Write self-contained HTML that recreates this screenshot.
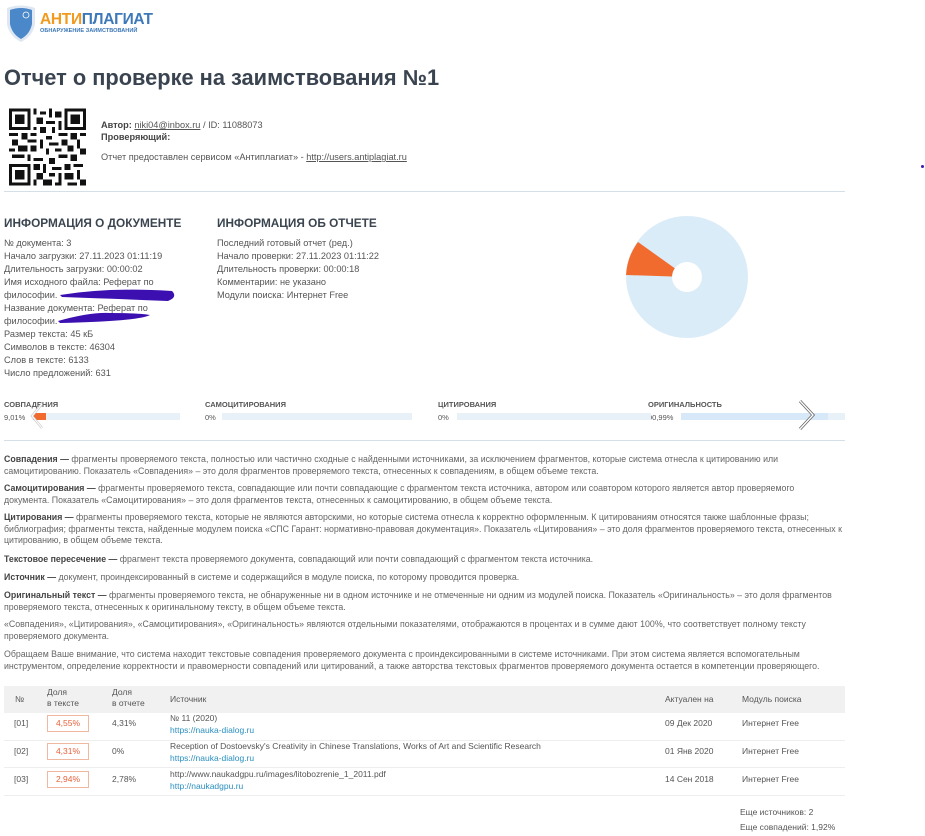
<!DOCTYPE html>
<html><head><meta charset="utf-8"><style>
*{margin:0;padding:0;box-sizing:border-box}
body{width:925px;height:836px;background:#fff;position:relative;overflow:hidden;font-family:"Liberation Sans","DejaVu Sans",sans-serif;color:#555}
.a{position:absolute;white-space:nowrap}
.s{font-size:9.2px;color:#555}
.p{font-size:8.8px;color:#666}
.p b{color:#444}
.h{font-size:11.8px;font-weight:bold;color:#3b4550}
.lbl{font-size:7.5px;font-weight:bold;color:#555}
.bar{position:absolute;height:7px;background:#e9f1f8}
.t{font-size:8.5px;color:#555}
.lnk{color:#2a8fc0}
.box{position:absolute;width:42px;height:17px;border:1px solid #f0b8a0;color:#e8603a;font-size:8.5px;text-align:center;line-height:15px}
</style></head><body>
<svg class="a" style="left:5px;top:4px" width="32" height="40" viewBox="0 0 32 40"><path d="M2 4 Q16 -1 30 4 L30 20 Q28 32 16 38 Q4 32 2 20 Z" fill="#dfe8f2"/><path d="M5 6 Q16 2 27 6 L27 20 Q25 30 16 35 Q7 30 5 20 Z" fill="#4a88c9"/><circle cx="21" cy="11" r="3" fill="none" stroke="#fff" stroke-width="0.8"/></svg>
<div class="a" style="left:40px;top:11px;font-size:15.5px;font-weight:bold;letter-spacing:-0.3px"><span style="color:#f29a1e">АНТИ</span><span style="color:#3d78b8">ПЛАГИАТ</span></div>
<div class="a" style="left:40px;top:28px;font-size:5.6px;font-weight:bold;color:#3d78b8">ОБНАРУЖЕНИЕ ЗАИМСТВОВАНИЙ</div>
<div class="a" style="left:4px;top:65px;font-size:21.8px;font-weight:bold;color:#3a4450">Отчет о проверке на заимствования №1</div>
<svg class="a" style="left:9px;top:108px" width="77" height="78" viewBox="0 0 25 25" shape-rendering="crispEdges">
<rect width="25" height="25" fill="#fff"/>
<g fill="#111"><path d="M0 0h7v7H0zM18 0h7v7h-7zM0 18h7v7H0z"/></g>
<g fill="#fff"><path d="M1 1h5v5H1zM19 1h5v5h-5zM1 19h5v5H1z"/></g>
<g fill="#111"><path d="M2 2h3v3H2zM20 2h3v3h-3zM2 20h3v3H2z"/>
<path d="M8 0h1v2H8zM10 1h2v1h-2zM13 0h1v3h-1zM15 1h2v2h-2zM9 3h2v2H9zM12 4h3v1h-3zM16 4h1v3h-1zM8 6h1v1H8zM10 6h2v2h-2zM14 6h1v2h-1zM0 8h3v1H0zM4 8h2v2H4zM7 8h2v1H7zM12 9h2v1h-2zM16 8h3v1h-3zM20 8h2v2h-2zM23 8h2v1h-2zM1 10h2v2H1zM6 10h3v1H6zM10 10h1v3h-1zM13 11h3v1h-3zM17 10h2v2h-2zM22 10h1v3h-1zM0 13h2v1H0zM3 12h3v2H3zM7 12h2v2H7zM12 13h1v2h-1zM15 13h2v1h-2zM19 12h2v2h-2zM23 13h2v2h-2zM1 15h4v1H1zM6 15h1v2H6zM8 16h3v1H8zM13 16h2v2h-2zM16 15h3v1h-3zM20 15h2v2h-2zM8 18h2v2H8zM11 18h1v3h-1zM14 19h3v1h-3zM18 18h2v2h-2zM21 18h3v1h-3zM9 21h2v2H9zM13 21h2v1h-2zM16 21h1v3h-1zM18 21h3v2h-3zM22 20h1v3h-1zM8 23h1v2H8zM11 23h3v2h-3zM15 24h2v1h-2zM19 24h3v1h-3zM23 23h2v2h-2z"/></g></svg>
<div class="a s" style="left:101px;top:120px"><b style="color:#444">Автор:</b> <u>niki04@inbox.ru</u> / ID: 11088073</div>
<div class="a s" style="left:101px;top:132px;font-weight:bold;color:#444">Проверяющий:</div>
<div class="a s" style="left:101px;top:152px">Отчет предоставлен сервисом «Антиплагиат» - <u>http://users.antiplagiat.ru</u></div>
<div class="a" style="left:4px;top:191px;width:841px;height:1px;background:#d5dfe8"></div>
<div class="a" style="left:921px;top:165px;width:3px;height:3px;border-radius:50%;background:#3a1bb0"></div>
<div class="a h" style="left:4px;top:216px">ИНФОРМАЦИЯ О ДОКУМЕНТЕ</div>
<div class="a h" style="left:217px;top:216px">ИНФОРМАЦИЯ ОБ ОТЧЕТЕ</div>
<div class="a s" style="left:4px;top:237px;line-height:13px">№ документа: 3<br>Начало загрузки: 27.11.2023 01:11:19<br>Длительность загрузки: 00:00:02<br>Имя исходного файла: Реферат по<br>философии.<br>Название документа: Реферат по<br>философии.<br>Размер текста: 45 кБ<br>Символов в тексте: 46304<br>Слов в тексте: 6133<br>Число предложений: 631</div>
<svg class="a" style="left:50px;top:285px" width="130" height="40"><path d="M10 10 Q60 2 122 6 Q128 12 118 16 Q70 14 12 12Z" fill="#3b0fb0"/><path d="M8 36 Q40 27 60 28 Q90 28 100 30 Q90 36 10 38Z" fill="#3b0fb0"/></svg>
<div class="a s" style="left:217px;top:237px;line-height:13px">Последний готовый отчет (ред.)<br>Начало проверки: 27.11.2023 01:11:22<br>Длительность проверки: 00:00:18<br>Комментарии: не указано<br>Модули поиска: Интернет Free</div>
<svg class="a" style="left:620px;top:210px" width="135" height="135" viewBox="-67 -67 135 135">
<circle r="61" fill="#dbecf9"/>
<path d="M0 0 L-61 -2 A61 61 0 0 1 -49 -35 Z" fill="#f26b2e"/>
<circle r="15" fill="#fff"/></svg>
<div class="a lbl" style="left:4px;top:400px">СОВПАДЕНИЯ</div>
<div class="a lbl" style="left:205px;top:400px">САМОЦИТИРОВАНИЯ</div>
<div class="a lbl" style="left:438px;top:400px">ЦИТИРОВАНИЯ</div>
<div class="a lbl" style="left:648px;top:400px">ОРИГИНАЛЬНОСТЬ</div>
<div class="a lbl" style="left:4px;top:413px;font-weight:normal">9,01%</div>
<div class="a lbl" style="left:205px;top:413px;font-weight:normal">0%</div>
<div class="a lbl" style="left:438px;top:413px;font-weight:normal">0%</div>
<div class="a lbl" style="left:648px;top:413px;font-weight:normal">90,99%</div>
<div class="bar" style="left:33px;top:413px;width:147px"></div>
<div class="bar" style="left:33px;top:413px;width:13px;background:#f26b2e"></div>
<div class="bar" style="left:222px;top:413px;width:190px"></div>
<div class="bar" style="left:457px;top:413px;width:194px"></div>
<div class="bar" style="left:681px;top:413px;width:164px"></div>
<div class="bar" style="left:681px;top:413px;width:147px;background:#d7e9f8"></div>
<svg class="a" style="left:28px;top:400px" width="20" height="32"><path d="M14 4 L4 16 L14 28" fill="none" stroke="#ccc" stroke-width="2.5"/><path d="M14 4 L4 16 L14 28" fill="none" stroke="#fff" stroke-width="1"/></svg>
<svg class="a" style="left:795px;top:398px" width="24" height="34"><path d="M5 3 L18 17 L5 31" fill="none" stroke="#666" stroke-width="3"/><path d="M5 3 L18 17 L5 31" fill="none" stroke="#fff" stroke-width="1.4"/></svg>
<div class="a" style="left:4px;top:440px;width:841px;height:1px;background:#d5dfe8"></div>
<div class="a p" style="left:4px;top:454px;line-height:11.5px"><b>Совпадения —</b> фрагменты проверяемого текста, полностью или частично сходные с найденными источниками, за исключением фрагментов, которые система отнесла к цитированию или<br>самоцитированию. Показатель «Совпадения» – это доля фрагментов проверяемого текста, отнесенных к совпадениям, в общем объеме текста.</div>
<div class="a p" style="left:4px;top:483px;line-height:11.5px"><b>Самоцитирования —</b> фрагменты проверяемого текста, совпадающие или почти совпадающие с фрагментом текста источника, автором или соавтором которого является автор проверяемого<br>документа. Показатель «Самоцитирования» – это доля фрагментов текста, отнесенных к самоцитированию, в общем объеме текста.</div>
<div class="a p" style="left:4px;top:512px;line-height:11.5px"><b>Цитирования —</b> фрагменты проверяемого текста, которые не являются авторскими, но которые система отнесла к корректно оформленным. К цитированиям относятся также шаблонные фразы;<br>библиография; фрагменты текста, найденные модулем поиска «СПС Гарант: нормативно-правовая документация». Показатель «Цитирования» – это доля фрагментов проверяемого текста, отнесенных к<br>цитированию, в общем объеме текста.</div>
<div class="a p" style="left:4px;top:554px"><b>Текстовое пересечение —</b> фрагмент текста проверяемого документа, совпадающий или почти совпадающий с фрагментом текста источника.</div>
<div class="a p" style="left:4px;top:572px"><b>Источник —</b> документ, проиндексированный в системе и содержащийся в модуле поиска, по которому проводится проверка.</div>
<div class="a p" style="left:4px;top:590px;line-height:11.5px"><b>Оригинальный текст —</b> фрагменты проверяемого текста, не обнаруженные ни в одном источнике и не отмеченные ни одним из модулей поиска. Показатель «Оригинальность» – это доля фрагментов<br>проверяемого текста, отнесенных к оригинальному тексту, в общем объеме текста.</div>
<div class="a p" style="left:4px;top:619px;line-height:11.5px">«Совпадения», «Цитирования», «Самоцитирования», «Оригинальность» являются отдельными показателями, отображаются в процентах и в сумме дают 100%, что соответствует полному тексту<br>проверяемого документа.</div>
<div class="a p" style="left:4px;top:649px;line-height:11.5px">Обращаем Ваше внимание, что система находит текстовые совпадения проверяемого документа с проиндексированными в системе источниками. При этом система является вспомогательным<br>инструментом, определение корректности и правомерности совпадений или цитирований, а также авторства текстовых фрагментов проверяемого документа остается в компетенции проверяющего.</div>
<div class="a" style="left:4px;top:686px;width:841px;height:27px;background:#f1f1f1"></div>
<div class="a t" style="left:15px;top:694px">№</div>
<div class="a t" style="left:47px;top:687px;line-height:11px">Доля<br>в тексте</div>
<div class="a t" style="left:112px;top:687px;line-height:11px">Доля<br>в отчете</div>
<div class="a t" style="left:170px;top:694px">Источник</div>
<div class="a t" style="left:665px;top:694px">Актуален на</div>
<div class="a t" style="left:742px;top:694px">Модуль поиска</div>
<div class="a" style="left:4px;top:740px;width:841px;height:1px;background:#eee"></div>
<div class="a" style="left:4px;top:767px;width:841px;height:1px;background:#eee"></div>
<div class="a" style="left:4px;top:795px;width:841px;height:1px;background:#eee"></div>
<div class="a t" style="left:14px;top:718px">[01]</div>
<div class="box" style="left:47px;top:715px">4,55%</div>
<div class="a t" style="left:112px;top:718px">4,31%</div>
<div class="a t" style="left:170px;top:713px;line-height:11.5px">№ 11 (2020)<br><span class="lnk">https://nauka-dialog.ru</span></div>
<div class="a t" style="left:665px;top:718px">09 Дек 2020</div>
<div class="a t" style="left:742px;top:718px">Интернет Free</div>
<div class="a t" style="left:14px;top:746px">[02]</div>
<div class="box" style="left:47px;top:743px">4,31%</div>
<div class="a t" style="left:112px;top:746px">0%</div>
<div class="a t" style="left:170px;top:741px;line-height:11.5px">Reception of Dostoevsky's Creativity in Chinese Translations, Works of Art and Scientific Research<br><span class="lnk">https://nauka-dialog.ru</span></div>
<div class="a t" style="left:665px;top:746px">01 Янв 2020</div>
<div class="a t" style="left:742px;top:746px">Интернет Free</div>
<div class="a t" style="left:14px;top:774px">[03]</div>
<div class="box" style="left:47px;top:771px">2,94%</div>
<div class="a t" style="left:112px;top:774px">2,78%</div>
<div class="a t" style="left:170px;top:769px;line-height:11.5px">http://www.naukadgpu.ru/images/litobozrenie_1_2011.pdf<br><span class="lnk">http://naukadgpu.ru</span></div>
<div class="a t" style="left:665px;top:774px">14 Сен 2018</div>
<div class="a t" style="left:742px;top:774px">Интернет Free</div>
<div class="a t" style="left:740px;top:807px">Еще источников: 2</div>
<div class="a t" style="left:740px;top:822px">Еще совпадений: 1,92%</div>
</body></html>
